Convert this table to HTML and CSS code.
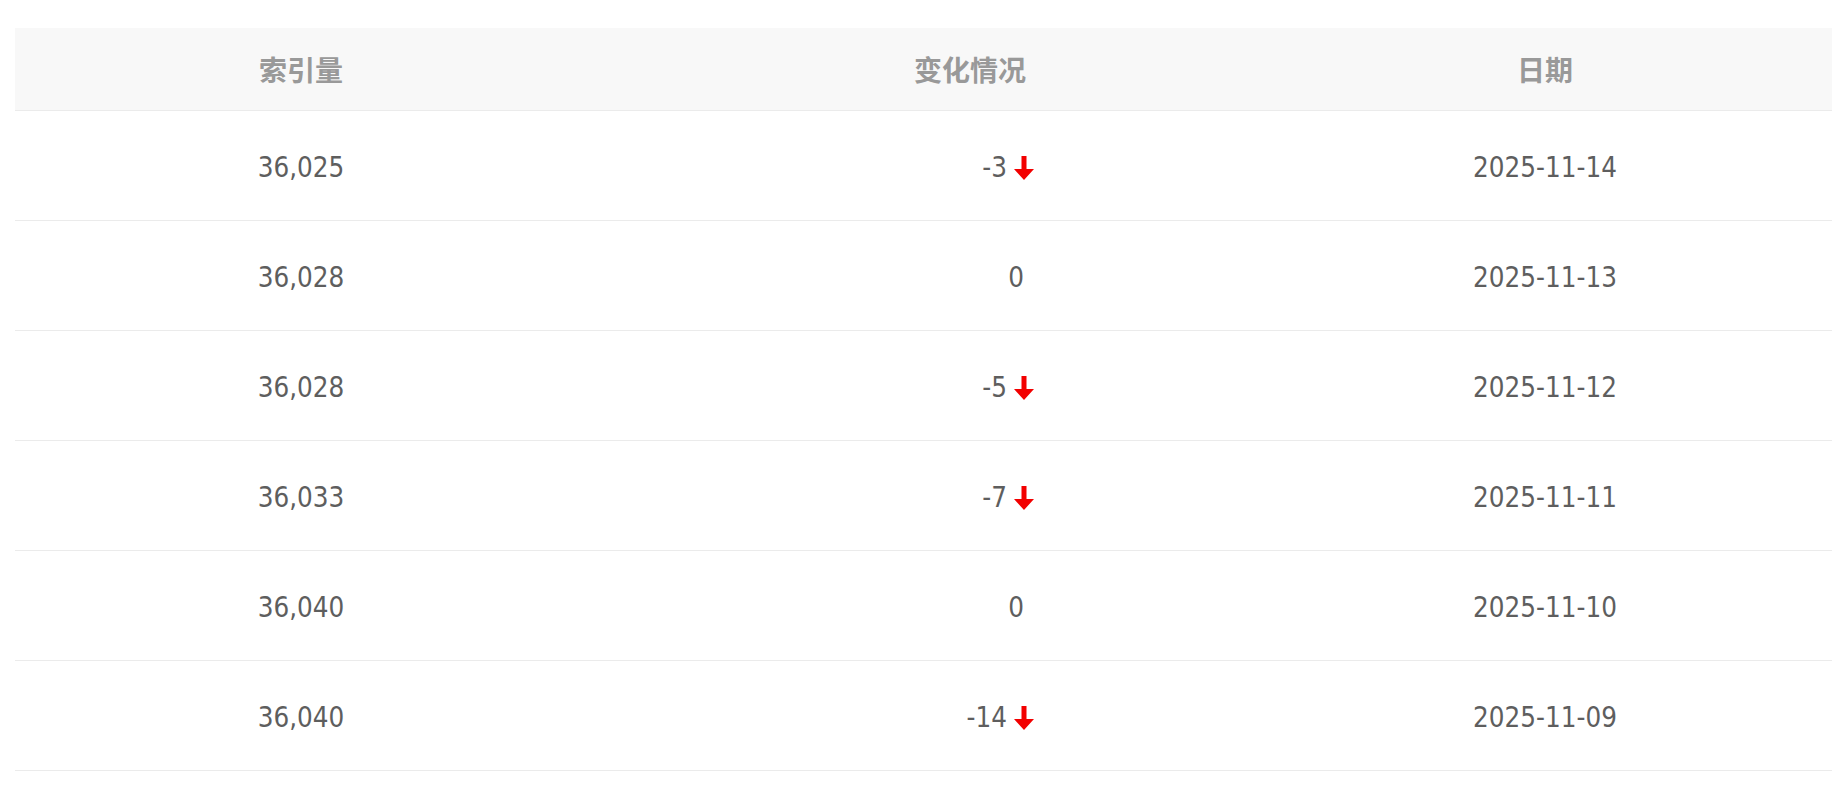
FILE: index.html
```html
<!DOCTYPE html>
<html lang="zh-CN">
<head>
<meta charset="utf-8">
<title>索引量</title>
<link rel="stylesheet" href="styles.css">
</head>
<body>
<div class="page">
  <div class="table">
    <div class="row head">
      <div class="cell">索引量</div>
      <div class="cell">变化情况</div>
      <div class="cell">日期</div>
      <div class="cell"></div>
    </div>
    <div class="row">
      <div class="cell">36,025</div>
      <div class="cell change"><span>-3</span><svg class="down" viewBox="0 0 20 24"><path d="M7.5 0h5v13h7.5l-10 11-10-11h7.5z"/></svg></div>
      <div class="cell">2025-11-14</div>
      <div class="cell"></div>
    </div>
    <div class="row">
      <div class="cell">36,028</div>
      <div class="cell change flat"><span>0</span></div>
      <div class="cell">2025-11-13</div>
      <div class="cell"></div>
    </div>
    <div class="row">
      <div class="cell">36,028</div>
      <div class="cell change"><span>-5</span><svg class="down" viewBox="0 0 20 24"><path d="M7.5 0h5v13h7.5l-10 11-10-11h7.5z"/></svg></div>
      <div class="cell">2025-11-12</div>
      <div class="cell"></div>
    </div>
    <div class="row">
      <div class="cell">36,033</div>
      <div class="cell change"><span>-7</span><svg class="down" viewBox="0 0 20 24"><path d="M7.5 0h5v13h7.5l-10 11-10-11h7.5z"/></svg></div>
      <div class="cell">2025-11-11</div>
      <div class="cell"></div>
    </div>
    <div class="row">
      <div class="cell">36,040</div>
      <div class="cell change flat"><span>0</span></div>
      <div class="cell">2025-11-10</div>
      <div class="cell"></div>
    </div>
    <div class="row">
      <div class="cell">36,040</div>
      <div class="cell change"><span>-14</span><svg class="down" viewBox="0 0 20 24"><path d="M7.5 0h5v13h7.5l-10 11-10-11h7.5z"/></svg></div>
      <div class="cell">2025-11-09</div>
      <div class="cell"></div>
    </div>
  </div>
</div>
</body>
</html>
```
FILE: styles.css
```css
html, body {
  margin: 0;
  padding: 0;
  background: #ffffff;
}
.page {
  padding: 28px 0 0 15px;
}
.table {
  display: flex;
  flex-direction: column;
}
.row {
  display: grid;
  grid-template-columns: 572px 766px 384px 1fr;
  height: 109px;
  border-bottom: 1px solid #ebebeb;
  font-family: "DejaVu Sans Condensed", "DejaVu Sans", "Noto Sans CJK SC", sans-serif;
  font-stretch: condensed;
  font-size: 27.5px;
  color: #5e5e5e;
}
.row .cell {
  padding-top: 3px;
}
.row.head {
  height: 82px;
  background: #f8f8f8;
  font-family: "Noto Sans CJK SC", sans-serif;
  font-stretch: normal;
  font-weight: 700;
  font-size: 28px;
  color: #999999;
}
.row.head .cell {
  padding-top: 0;
}
.cell {
  display: flex;
  align-items: center;
  justify-content: center;
}
.cell.change {
  justify-content: flex-end;
  padding-right: 319px;
}
.cell.change.flat {
  padding-right: 329px;
}
.down {
  width: 20px;
  height: 24px;
  margin-left: 7px;
  margin-top: 2px;
  fill: #f20000;
}
```
